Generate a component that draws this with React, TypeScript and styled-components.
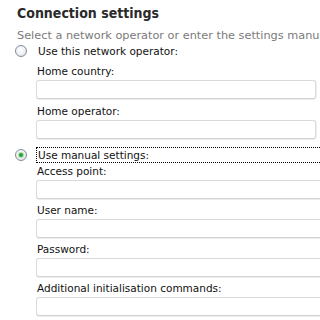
import React from "react";
import styled, { createGlobalStyle } from "styled-components";

const GlobalStyle = createGlobalStyle`
  html, body {
    margin: 0;
    padding: 0;
    background: #ffffff;
    overflow: hidden;
  }
  body {
    font-family: "DejaVu Sans", Verdana, sans-serif;
    color: #111111;
  }
`;

const Page = styled.div`
  width: 320px;
  height: 320px;
  overflow: hidden;
  padding-top: 4px;
  box-sizing: border-box;
`;

const Title = styled.div`
  margin-left: 17px;
  font-family: "DejaVu Sans Condensed", "DejaVu Sans", sans-serif;
  font-size: 14px;
  font-weight: 700;
  color: #2a2a2a;
  line-height: 18px;
  white-space: nowrap;
`;

const Intro = styled.div`
  margin-left: 17px;
  margin-top: 7px;
  font-size: 11.3px;
  line-height: 14px;
  color: #7a7a7a;
  white-space: nowrap;
`;

const Option = styled.div<{ $top: number }>`
  display: flex;
  align-items: center;
  margin-top: ${(p) => p.$top}px;
  height: 16px;
`;

const Radio = styled.span<{ $checked?: boolean }>`
  width: 12px;
  height: 12px;
  margin-left: 15px;
  margin-right: 9px;
  border-radius: 50%;
  border: 1px solid #7f8d9c;
  background: radial-gradient(circle at 45% 40%, #ffffff 0%, #eef0f3 55%, #cdd3db 100%);
  box-sizing: border-box;
  display: flex;
  align-items: center;
  justify-content: center;
  flex: none;

  &::after {
    content: "";
    display: ${(p) => (p.$checked ? "block" : "none")};
    width: 4px;
    height: 4px;
    border-radius: 50%;
    background: #2aa336;
    box-shadow: 0 0 1px 1px #a6dca9;
  }
`;

const OptionLabel = styled.span<{ $focused?: boolean }>`
  font-size: 10.5px;
  line-height: 14px;
  padding: 0 0 0 1px;
  flex: 1;
  white-space: nowrap;
  border: 1px dotted ${(p) => (p.$focused ? "#000000" : "transparent")};
  border-right: none;
`;

const Group = styled.div<{ $width: number }>`
  margin-left: 36px;
  width: ${(p) => p.$width}px;
  display: flex;
  flex-direction: column;
`;

const Field = styled.div<{ $gap: number }>`
  display: flex;
  flex-direction: column;
  margin-top: ${(p) => p.$gap}px;
`;

const FieldLabel = styled.div`
  font-size: 10.5px;
  line-height: 14px;
  margin-left: 1px;
  white-space: nowrap;
  margin-bottom: 2px;
`;

const Input = styled.div`
  height: 19px;
  border: 1px solid #dadada;
  border-bottom-color: #d2d2d2;
  border-radius: 3px;
  box-sizing: border-box;
  background: #ffffff;
  box-shadow: 0 1px 0 #ededed, 1px 0 0 #f0f0f0;
`;

const upperFields = ["Home country:", "Home operator:"];
const lowerFields = [
  "Access point:",
  "User name:",
  "Password:",
  "Additional initialisation commands:",
];

export default function App() {
  return (
    <Page>
      <GlobalStyle />
      <Title>Connection settings</Title>
      <Intro>Select a network operator or enter the settings manually:</Intro>
      <Option $top={0}>
        <Radio />
        <OptionLabel>Use this network operator:</OptionLabel>
      </Option>
      <Group $width={280}>
        {upperFields.map((label) => (
          <Field key={label} $gap={5}>
            <FieldLabel>{label}</FieldLabel>
            <Input />
          </Field>
        ))}
      </Group>
      <Option $top={8}>
        <Radio $checked />
        <OptionLabel $focused>Use manual settings:</OptionLabel>
      </Option>
      <Group $width={300}>
        {lowerFields.map((label, i) => (
          <Field key={label} $gap={i === 0 ? 1 : 4}>
            <FieldLabel>{label}</FieldLabel>
            <Input />
          </Field>
        ))}
      </Group>
    </Page>
  );
}
